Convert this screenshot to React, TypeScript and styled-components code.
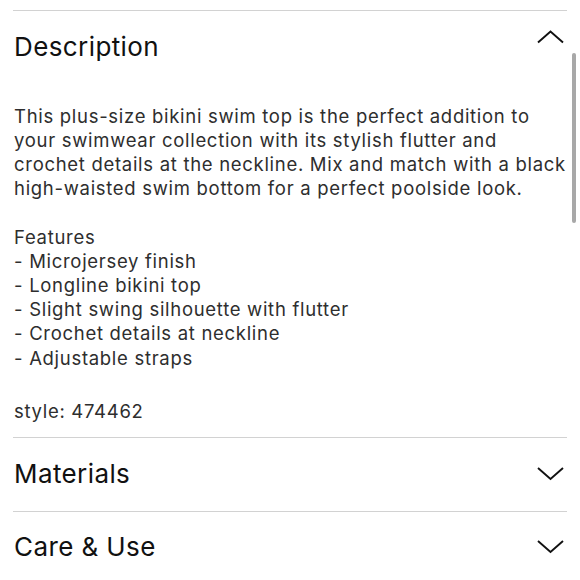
import React from 'react'
import styled, { createGlobalStyle } from 'styled-components'

const GlobalStyle = createGlobalStyle`
  html, body {
    margin: 0;
    padding: 0;
    background: #fff;
  }
  body {
    font-family: Inter, 'Open Sans', sans-serif;
    -webkit-font-smoothing: antialiased;
  }
`

const Page = styled.div`
  position: relative;
  width: 580px;
  height: 580px;
  overflow: hidden;
  padding: 10px 13px 0;
  box-sizing: border-box;
`

const Section = styled.section`
  border-top: 1.5px solid #d2d2d2;
`

const Header = styled.div`
  display: flex;
  align-items: center;
  justify-content: space-between;
  height: 72.5px;
  padding-left: 1px;
`

const Title = styled.h2`
  margin: 0 0 2px;
  font-size: 26px;
  font-weight: 400;
  color: #111;
  letter-spacing: 0.4px;
`

const Chevron = styled.svg<{ $open?: boolean }>`
  width: 27px;
  height: 27px;
  margin-right: 3px;
  transform: ${(p) => (p.$open ? 'translateY(-10.5px) rotate(180deg)' : 'translateY(-1px)')};
`

const Body = styled.div`
  padding: 20.3px 0 13.7px 1px;
  font-size: 18.5px;
  line-height: 24.2px;
  letter-spacing: 0.7px;
  color: #2e2e2e;
`

const Para = styled.p<{ $gap?: number; $top?: number }>`
  margin: ${(p) => p.$top ?? 0}px 0 ${(p) => p.$gap ?? 0}px;
`

const Scrollbar = styled.div`
  position: absolute;
  top: 53px;
  right: 4px;
  width: 4px;
  height: 170px;
  border-radius: 2px;
  background: #a8a8a8;
`

const ChevronIcon = ({ open }: { open?: boolean }) => (
  <Chevron $open={open} viewBox="0 0 27 27" fill="none">
    <path d="M1 8 L13.5 19 L26 8" stroke="#111" strokeWidth="1.9" />
  </Chevron>
)

const features = [
  'Microjersey finish',
  'Longline bikini top',
  'Slight swing silhouette with flutter',
  'Crochet details at neckline',
  'Adjustable straps',
]

const App = () => (
  <>
    <GlobalStyle />
    <Page>
      <Section>
        <Header>
          <Title>Description</Title>
          <ChevronIcon open />
        </Header>
        <Body>
          <Para $gap={24}>
            This plus-size bikini swim top is the perfect addition to
            <br />
            your swimwear collection with its stylish flutter and
            <br />
            crochet details at the neckline. Mix and match with a black
            <br />
            high-waisted swim bottom for a perfect poolside look.
          </Para>
          <Para>
            Features
            {features.map((f) => (
              <React.Fragment key={f}>
                <br />- {f}
              </React.Fragment>
            ))}
          </Para>
          <Para $top={29.5}>style: 474462</Para>
        </Body>
      </Section>
      <Section>
        <Header>
          <Title>Materials</Title>
          <ChevronIcon />
        </Header>
      </Section>
      <Section>
        <Header>
          <Title>Care &amp; Use</Title>
          <ChevronIcon />
        </Header>
      </Section>
      <Scrollbar />
    </Page>
  </>
)

export default App
